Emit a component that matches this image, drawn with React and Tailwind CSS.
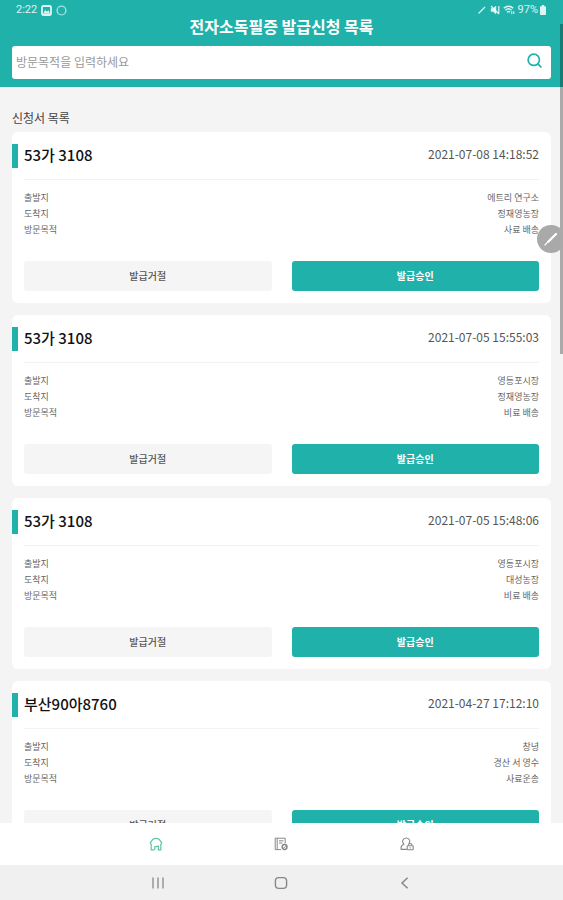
import React, { useState } from 'react';
import { Search } from 'lucide-react';

const requests = [
  {
    id: 1,
    plate: '53가 3108',
    date: '2021-07-08 14:18:52',
    from: '에트리 연구소',
    to: '정재영농장',
    purpose: '사료 배송',
  },
  {
    id: 2,
    plate: '53가 3108',
    date: '2021-07-05 15:55:03',
    from: '영등포시장',
    to: '정재영농장',
    purpose: '비료 배송',
  },
  {
    id: 3,
    plate: '53가 3108',
    date: '2021-07-05 15:48:06',
    from: '영등포시장',
    to: '대성농장',
    purpose: '비료 배송',
  },
  {
    id: 4,
    plate: '부산90아8760',
    date: '2021-04-27 17:12:10',
    from: '창녕',
    to: '경산 서 영수',
    purpose: '사료운송',
  },
];

const StatusBar = () => (
  <div className="flex h-[18px] items-center justify-between px-1 pt-0.5 font-[Roboto,sans-serif] text-[11px] text-white/85">
    <div className="flex items-center gap-1">
      <span>2:22</span>
      <svg className="h-[11px] w-[11px]" viewBox="0 0 11 11" fill="none">
        <rect x="1" y="1" width="9" height="9" rx="1.5" stroke="currentColor" strokeWidth="1.8" />
        <path d="M2 8.8 4.2 5 6 6.8 7.4 5.2 9.2 8.8Z" fill="currentColor" />
      </svg>
      <svg className="h-[11px] w-[11px] opacity-70" viewBox="0 0 11 11" fill="none">
        <circle cx="5.5" cy="5.5" r="4.4" stroke="currentColor" strokeWidth="1.4" />
      </svg>
    </div>
    <div className="flex items-center gap-[3px]">
      <svg className="h-2.5 w-2.5" viewBox="0 0 10 10" fill="none" stroke="currentColor">
        <path d="M1.5 8.5 8 2" strokeWidth="1.3" />
      </svg>
      <svg className="h-2.5 w-2.5" viewBox="0 0 10 10" fill="currentColor" stroke="currentColor">
        <path d="M1 3.5h2L6 1v8L3 6.5H1Z" strokeWidth="0.4" />
        <path d="M1 1 9 9M8.8 1v8" fill="none" strokeWidth="1.2" />
      </svg>
      <svg className="h-2.5 w-3" viewBox="0 0 12 10" fill="none" stroke="currentColor" strokeWidth="1.5">
        <path d="M0.8 3.2C3.6 0.6 7.6 0.6 10.2 3.2M2.4 5.2c1.8-1.6 4.4-1.6 6.2 0M4 7.2c1-.9 2-.9 3 0" />
        <path d="M8.8 6.2v3M10.8 9V6.2" strokeWidth="1" />
      </svg>
      <span className="-mr-0.5">97%</span>
      <svg className="h-2.5 w-2" viewBox="0 0 8 10" fill="currentColor">
        <path d="M2.8 0h2.4v1.2h1A.8.8 0 0 1 7 2v7.2a.8.8 0 0 1-.8.8H1.8a.8.8 0 0 1-.8-.8V2a.8.8 0 0 1 .8-.8h1Z" />
      </svg>
    </div>
  </div>
);

const DetailRow = ({ label, value }) => (
  <div className="flex justify-between">
    <dt>{label}</dt>
    <dd>{value}</dd>
  </div>
);

const RequestCard = ({ request }) => (
  <article className="rounded-md bg-white py-3">
    <div className="flex h-6 items-center">
      <span className="h-6 w-1.5 bg-[#20b2aa]" />
      <div className="flex flex-1 items-center justify-between pr-3 pl-1.5">
        <h3 className="pb-0.5 text-[15px] leading-6 font-medium text-[#111]">{request.plate}</h3>
        <time className="pb-1 text-[12px] leading-5 text-[#555]">{request.date}</time>
      </div>
    </div>
    <div className="mx-3 mt-[11px] border-t border-[#f3f3f3] pt-2.5">
      <dl className="text-[9px] leading-4 text-[#666]">
        <DetailRow label="출발지" value={request.from} />
        <DetailRow label="도착지" value={request.to} />
        <DetailRow label="방문목적" value={request.purpose} />
      </dl>
      <div className="mt-[23px] grid grid-cols-2 gap-5">
        <button type="button" className="h-[30px] rounded-[3px] bg-[#f5f5f5] pb-0.5 text-[10px] font-medium text-[#555]">
          발급거절
        </button>
        <button type="button" className="h-[30px] rounded-[3px] bg-[#20b2aa] pb-0.5 text-[10px] font-bold text-white">
          발급승인
        </button>
      </div>
    </div>
  </article>
);

const App = () => {
  const [query, setQuery] = useState('');

  return (
    <div className="relative flex h-screen flex-col overflow-hidden bg-[#f4f4f4] font-['Noto_Sans_CJK_KR',sans-serif]">
      {/* Header */}
      <header className="bg-[#20b2aa] px-3 pb-2">
        <StatusBar />
        <h1 className="text-center text-[16px] leading-4 font-bold text-white">전자소독필증 발급신청 목록</h1>
        <form className="mt-3 flex h-[33px] items-center rounded-[3px] bg-white pr-2 pl-1">
          <input
            type="text"
            aria-label="방문목적"
            placeholder="방문목적을 입력하세요"
            value={query}
            onChange={(e) => setQuery(e.target.value)}
            className="h-full min-w-0 flex-1 pb-0.5 text-[12px] text-[#444] outline-none placeholder:text-[#999]"
          />
          <button type="button" aria-label="검색" className="pb-1 text-[#20b2aa]">
            <Search className="h-[17px] w-[17px]" strokeWidth={2.4} />
          </button>
        </form>
      </header>

      {/* Request list */}
      <main className="min-h-0 flex-1 overflow-y-auto px-3 [scrollbar-width:none]">
        <h2 className="mt-[23px] mb-1.5 text-[12px] leading-4 text-[#444]">신청서 목록</h2>
        <div className="flex flex-col gap-3 pb-3">
          {requests.map((request) => (
            <RequestCard key={request.id} request={request} />
          ))}
        </div>
      </main>

      {/* Tabs */}
      <nav className="bg-white">
        <div className="mx-auto grid h-[42px] w-[67%] grid-cols-3 place-items-center text-[#888]">
          <a href="#home" aria-label="홈" className="text-[#5cc5a8]">
            <svg className="h-3.5 w-3.5" viewBox="0 0 14 14" fill="none" stroke="currentColor" strokeWidth="1.2">
              <path d="M5.4 12.8H2.2V7.4L1.2 5.8 3.6 2.6Q7 .2 10.4 2.6L12.8 5.8 11.8 7.4v5.4H9.4V9.2L5.8 9.8v3" />
            </svg>
          </a>
          <a href="#list" aria-label="신청 목록">
            <svg className="h-3.5 w-3.5" viewBox="0 0 14 14" fill="none" stroke="currentColor">
              <path d="M7 12.6H1.2V1.2h10v5.4M3.2 1.2v11.4M5 3.8h4.4M5 6h3.4" />
              <circle cx="10.6" cy="10" r="2.4" strokeWidth="1.5" />
              <path d="m9.6 10 .8.8 1.4-1.6" />
            </svg>
          </a>
          <a href="#account" aria-label="내 정보">
            <svg className="h-3.5 w-3.5" viewBox="0 0 14 14" fill="none" stroke="currentColor" strokeWidth="1.1">
              <path d="M6.8 12.4H1.2C.6 9.6 1.8 8 3.8 7.2 2.6 5.8 2.4 4.6 2.8 3.2 4 .2 8.6.2 9.6 3.2c.3 1.3 0 2.5-.8 3.6" />
              <rect x="7.2" y="8.8" width="6" height="4" rx="0.6" />
              <path d="M8.6 8.6V7.4c.4-1.2 2.8-1.2 3.2 0v1.2M10.2 10.2v1.2" />
            </svg>
          </a>
        </div>
      </nav>

      {/* Device navigation */}
      <div className="bg-[#f0f0f0]">
        <div className="mx-auto grid h-[35px] w-[66%] grid-cols-3 place-items-center text-[#888]">
          <button type="button" aria-label="최근 앱">
            <svg className="h-3.5 w-3.5" viewBox="0 0 14 14" fill="none" stroke="currentColor" strokeWidth="1.3">
              <path d="M2 1.5v11M7 1.5v11M12 1.5v11" />
            </svg>
          </button>
          <button type="button" aria-label="홈 화면">
            <svg className="h-3.5 w-3.5" viewBox="0 0 14 14" fill="none" stroke="currentColor" strokeWidth="1.4">
              <rect x="1.4" y="1.6" width="11.2" height="10.8" rx="3.4" />
            </svg>
          </button>
          <button type="button" aria-label="뒤로">
            <svg className="h-3.5 w-3.5" viewBox="0 0 14 14" fill="none" stroke="currentColor" strokeWidth="1.5">
              <path d="M9.6 1.8 4 7l5.6 5.2" />
            </svg>
          </button>
        </div>
      </div>

      {/* Scroll thumb and pen shortcut float over the list */}
      <div className="absolute top-6 right-0 h-[330px] w-[3px] bg-black/30" />
      <button
        type="button"
        aria-label="펜"
        className="absolute top-[225px] -right-0.5 flex h-7 w-7 items-center justify-center rounded-full bg-[#a9a9a9]"
      >
        <svg className="h-4 w-4" viewBox="0 0 16 16" fill="none" stroke="#fff" strokeLinecap="round">
          <path d="M2 14 5.5 10.2" strokeWidth="1.2" />
          <path d="M5.5 10.5 13 3" strokeWidth="2.4" />
        </svg>
      </button>
    </div>
  );
};

export default App;
